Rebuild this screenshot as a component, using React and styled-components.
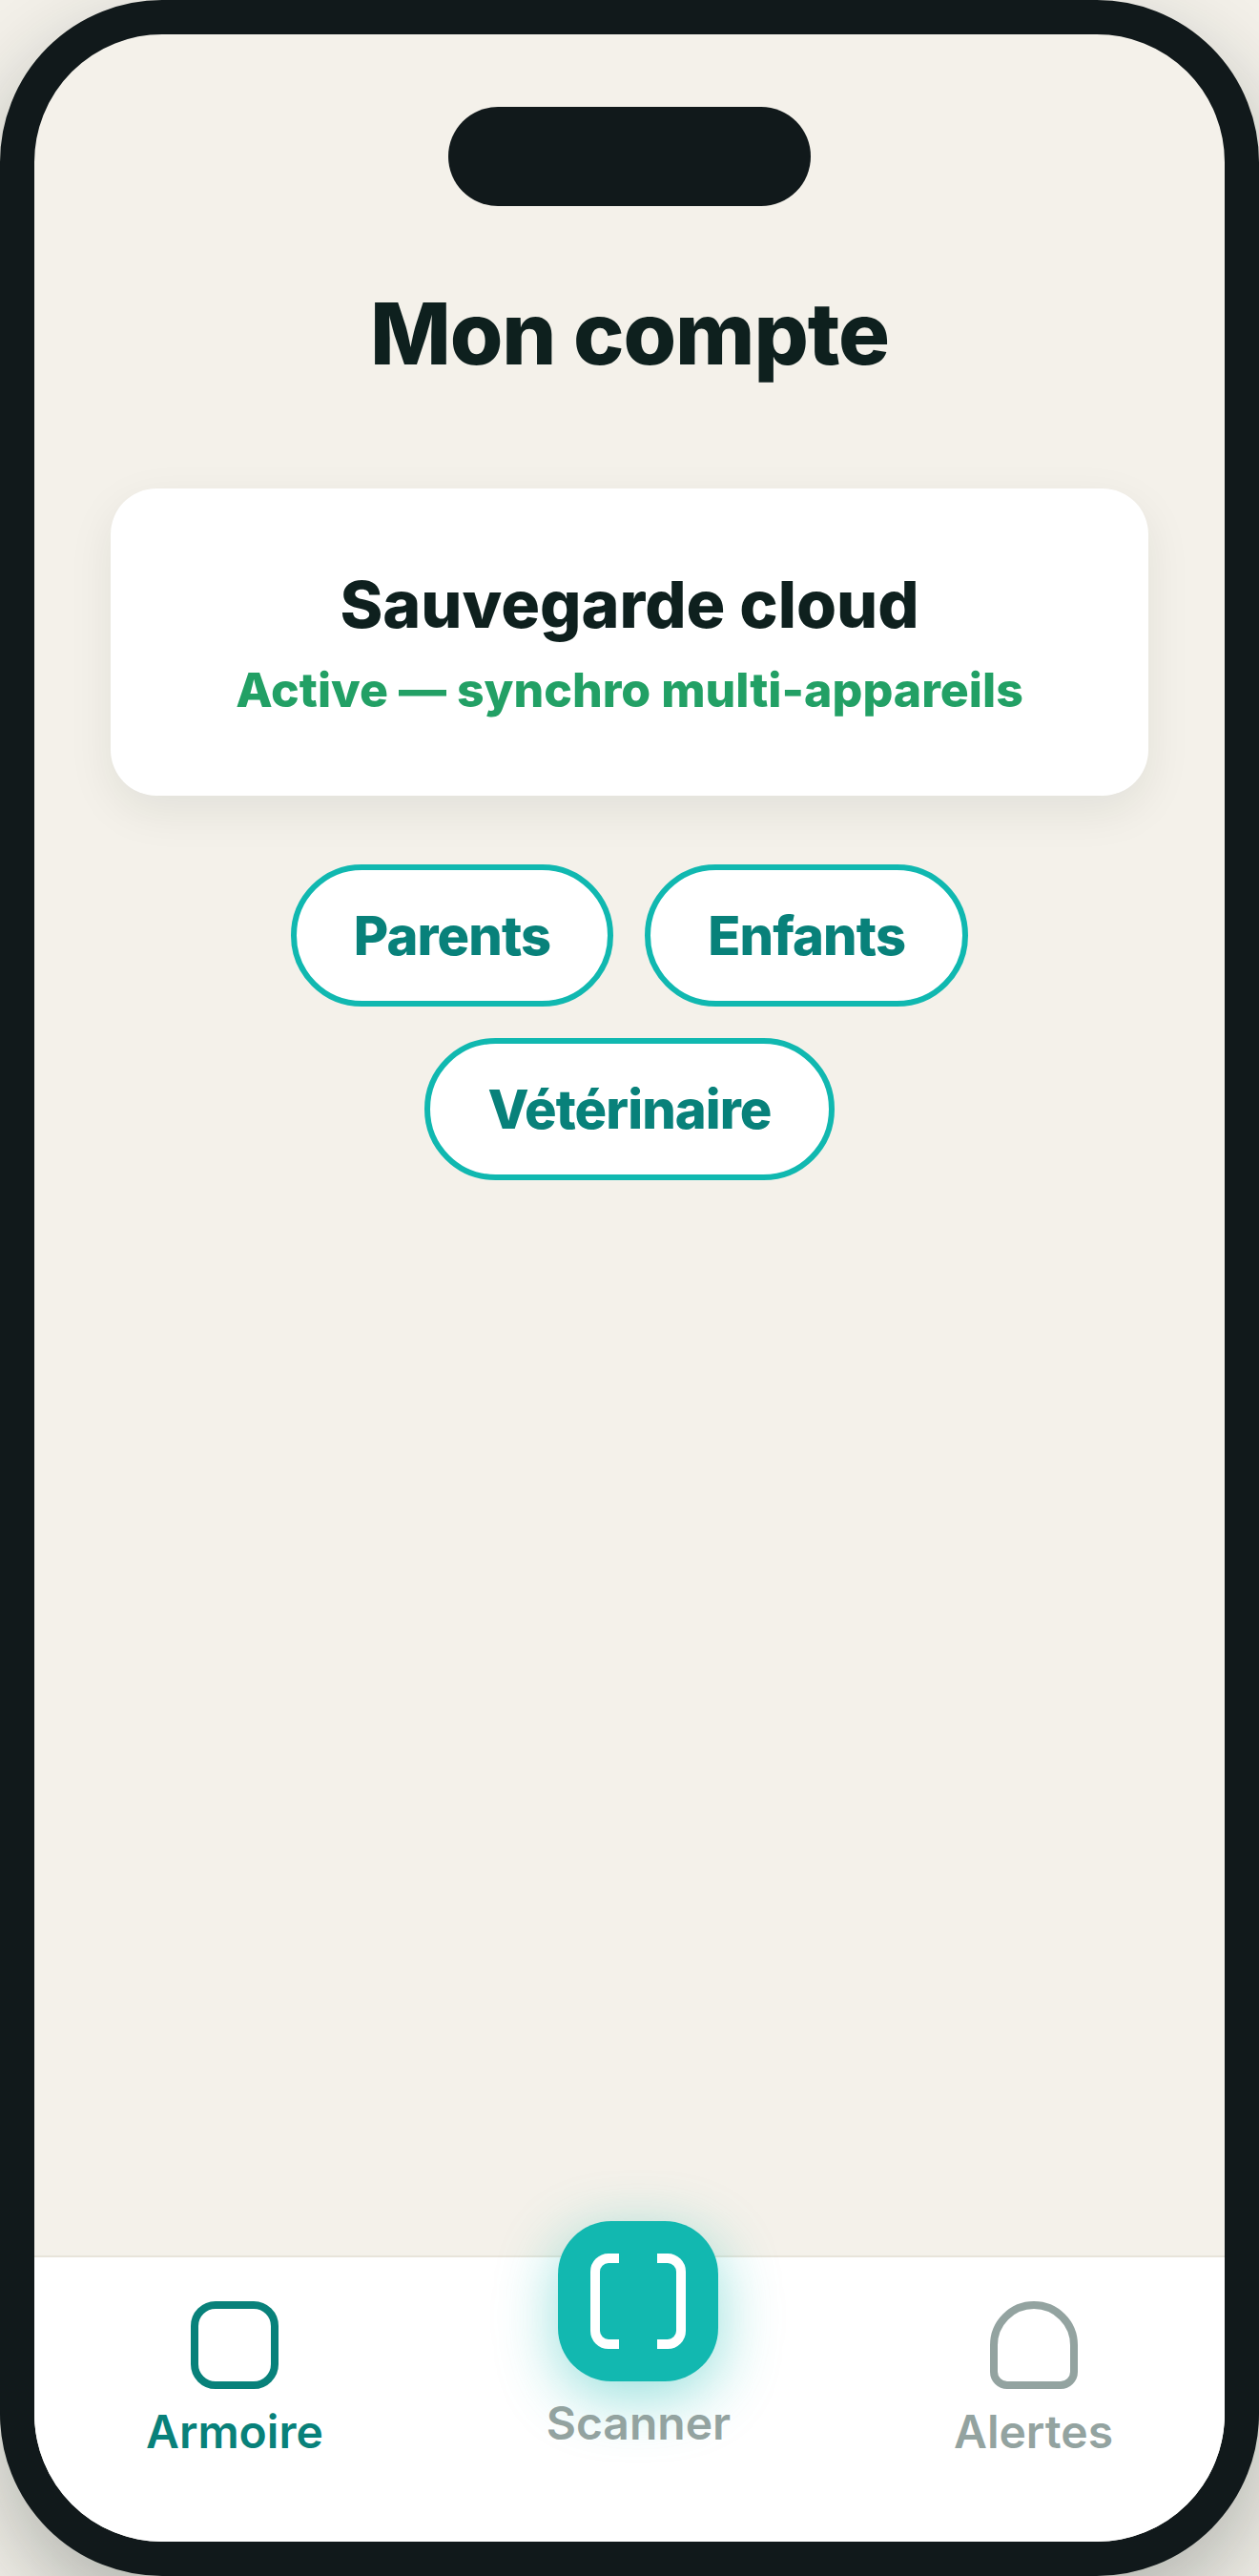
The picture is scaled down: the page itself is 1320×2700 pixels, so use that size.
import React from "react";
import styled, { createGlobalStyle } from "styled-components";

const Global = createGlobalStyle`
  html, body { margin: 0; padding: 0; }
  body {
    background: #f4f1ea;
    font-family: Inter, "Liberation Sans", sans-serif;
  }
`;

const Phone = styled.div`
  position: relative;
  box-sizing: border-box;
  width: 1320px;
  height: 2700px;
  border: 36px solid #11191b;
  border-radius: 170px;
  background: #f4f1ea;
  box-shadow: 0 40px 100px rgba(15, 32, 30, 0.3);
  overflow: hidden;
`;

const Screen = styled.div`
  display: flex;
  flex-direction: column;
  height: 100%;
`;

const Notch = styled.div`
  position: absolute;
  top: 76px;
  left: 434px;
  width: 380px;
  height: 104px;
  border-radius: 52px;
  background: #11191b;
`;

const Content = styled.main`
  flex: 1;
  display: flex;
  flex-direction: column;
  align-items: center;
  padding: 261px 80px 0;
`;

const Title = styled.h1`
  margin: 0;
  font-size: 90px;
  line-height: 106px;
  font-weight: 800;
  letter-spacing: -1.1px;
  color: #0e201e;
`;

const Card = styled.section`
  box-sizing: border-box;
  width: 1088px;
  height: 322px;
  margin-top: 109px;
  padding: 80px 0 0;
  border-radius: 48px;
  background: #fff;
  box-shadow: 0 16px 48px rgba(15, 32, 30, 0.08);
  text-align: center;
`;

const CardTitle = styled.h2`
  margin: 0;
  font-size: 68px;
  line-height: 82px;
  font-weight: 800;
  color: #0e201e;
`;

const CardStatus = styled.p`
  margin: 19px 0 0;
  font-size: 50px;
  line-height: 60px;
  font-weight: 800;
  color: #22a065;
`;

const Pills = styled.div`
  display: flex;
  flex-wrap: wrap;
  justify-content: center;
  gap: 33px;
  width: 800px;
  margin-top: 72px;
`;

const Pill = styled.button`
  box-sizing: border-box;
  height: 149px;
  padding: 0 60px;
  border: 6px solid #10b8b0;
  border-radius: 75px;
  background: #fff;
  font-family: inherit;
  font-size: 56px;
  font-weight: 800;
  letter-spacing: -0.9px;
  color: #08817a;
`;

const TabBar = styled.nav`
  box-sizing: border-box;
  display: flex;
  justify-content: space-around;
  align-items: flex-start;
  height: 300px;
  border-top: 2px solid #e8e4da;
  background: #fff;
`;

const Tab = styled.div`
  display: flex;
  flex-direction: column;
  align-items: center;
  gap: 16px;
  padding-top: 46px;
  color: ${(p) => (p.$active ? "#08817a" : "#93a3a0")};
`;

const TabLabel = styled.span`
  font-size: 48px;
  line-height: 58px;
  font-weight: 600;
`;

const ScanTab = styled(Tab)`
  gap: 15px;
  padding-top: 0;
  margin-top: -38px;
`;

const ScanButton = styled.div`
  display: flex;
  align-items: center;
  justify-content: center;
  width: 168px;
  height: 168px;
  border-radius: 56px;
  background: #12b8b0;
  box-shadow: 0 16px 64px rgba(18, 184, 176, 0.45);
`;

const Square = () => (
  <svg width="92" height="92" viewBox="0 0 92 92" fill="none" stroke="currentColor" strokeWidth="8">
    <rect x="4" y="4" width="84" height="84" rx="22" />
  </svg>
);

const Bell = () => (
  <svg width="92" height="92" viewBox="0 0 92 92" fill="none" stroke="currentColor" strokeWidth="8">
    <path d="M4 46a42 42 0 0 1 84 0v28a14 14 0 0 1-14 14H18a14 14 0 0 1-14-14z" />
  </svg>
);

const Brackets = () => (
  <svg width="100" height="100" viewBox="0 0 100 100" fill="none" stroke="#fff" strokeWidth="10">
    <path d="M30 5H19a14 14 0 0 0-14 14v62a14 14 0 0 0 14 14h11" />
    <path d="M70 5h11a14 14 0 0 1 14 14v62a14 14 0 0 1-14 14H70" />
  </svg>
);

export default function App() {
  return (
    <>
      <Global />
      <Phone>
        <Notch />
        <Screen>
          <Content>
            <Title>Mon compte</Title>
            <Card>
              <CardTitle>Sauvegarde cloud</CardTitle>
              <CardStatus>Active — synchro multi-appareils</CardStatus>
            </Card>
            <Pills>
              <Pill>Parents</Pill>
              <Pill>Enfants</Pill>
              <Pill>Vétérinaire</Pill>
            </Pills>
          </Content>
          <TabBar>
            <Tab $active>
              <Square />
              <TabLabel>Armoire</TabLabel>
            </Tab>
            <ScanTab>
              <ScanButton>
                <Brackets />
              </ScanButton>
              <TabLabel>Scanner</TabLabel>
            </ScanTab>
            <Tab>
              <Bell />
              <TabLabel>Alertes</TabLabel>
            </Tab>
          </TabBar>
        </Screen>
      </Phone>
    </>
  );
}
